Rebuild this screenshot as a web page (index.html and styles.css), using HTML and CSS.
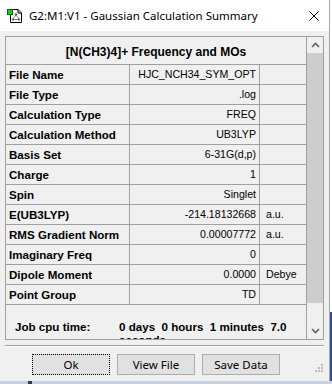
FILE: index.html
```html
<!DOCTYPE html>
<html>
<head>
<meta charset="utf-8">
<link rel="stylesheet" href="styles.css">
</head>
<body>
<div class="window">
  <div class="titlebar">
    <svg class="app-icon" width="16" height="16" viewBox="0 0 16 16">
      <path d="M3.5 1.5 H11 L14.5 5 V14.5 H3.5 Z" fill="#fff" stroke="#000"/>
      <path d="M11 1.5 V5 H14.5" fill="none" stroke="#000"/>
      <path d="M9 6.5 L6 11.5 M9 6.5 L12 11.5 M6 11.5 H12" stroke="#8a8a8a" stroke-width="1"/>
      <circle cx="9" cy="6.5" r="1.3" fill="#6a6a6a"/>
      <circle cx="6" cy="11.5" r="1.3" fill="#6a6a6a"/>
      <circle cx="12" cy="11.5" r="1.3" fill="#6a6a6a"/>
      <rect x="0.5" y="1.5" width="5" height="5" fill="#19d219" stroke="#0a6a0a"/>
    </svg>
    <span class="title">G2:M1:V1 - Gaussian Calculation Summary</span>
    <svg class="close" width="10" height="10" viewBox="0 0 10 10">
      <path d="M0.5 0.5 L9.5 9.5 M9.5 0.5 L0.5 9.5" stroke="#000" stroke-width="1"/>
    </svg>
  </div>
  <div class="client">
    <div class="panel">
      <div class="grid-area">
        <div class="hdr">[N(CH3)4]+ Frequency and MOs</div>
        <div class="row"><div class="lbl">File Name</div><div class="val">HJC_NCH34_SYM_OPT</div><div class="unit"></div></div>
        <div class="row"><div class="lbl">File Type</div><div class="val">.log</div><div class="unit"></div></div>
        <div class="row"><div class="lbl">Calculation Type</div><div class="val">FREQ</div><div class="unit"></div></div>
        <div class="row"><div class="lbl">Calculation Method</div><div class="val">UB3LYP</div><div class="unit"></div></div>
        <div class="row"><div class="lbl">Basis Set</div><div class="val">6-31G(d,p)</div><div class="unit"></div></div>
        <div class="row"><div class="lbl">Charge</div><div class="val">1</div><div class="unit"></div></div>
        <div class="row"><div class="lbl">Spin</div><div class="val">Singlet</div><div class="unit"></div></div>
        <div class="row"><div class="lbl">E(UB3LYP)</div><div class="val">-214.18132668</div><div class="unit">a.u.</div></div>
        <div class="row"><div class="lbl">RMS Gradient Norm</div><div class="val">0.00007772</div><div class="unit">a.u.</div></div>
        <div class="row"><div class="lbl">Imaginary Freq</div><div class="val">0</div><div class="unit"></div></div>
        <div class="row"><div class="lbl">Dipole Moment</div><div class="val">0.0000</div><div class="unit">Debye</div></div>
        <div class="row"><div class="lbl">Point Group</div><div class="val">TD</div><div class="unit"></div></div>
        <div class="cpu"><span class="cpu-lbl">Job cpu time:</span><span class="cpu-val">0 days  0 hours  1 minutes  7.0 seconds</span></div>
      </div>
      <div class="vscroll">
        <div class="sb-up">
          <svg width="9" height="6" viewBox="0 0 9 6"><path d="M1 5 L4.5 1.5 L8 5" fill="none" stroke="#606060" stroke-width="1.6"/></svg>
        </div>
        <div class="sb-thumb"></div>
        <div class="sb-track"></div>
        <div class="sb-down">
          <svg width="9" height="6" viewBox="0 0 9 6"><path d="M1 1 L4.5 4.5 L8 1" fill="none" stroke="#606060" stroke-width="1.6"/></svg>
        </div>
      </div>
    </div>
    <div class="sep"></div>
    <div class="buttons">
      <div class="btn btn-default">Ok</div>
      <div class="btn">View File</div>
      <div class="btn">Save Data</div>
    </div>
    <svg class="grip" width="10" height="10" viewBox="0 0 10 10">
      <rect x="8" y="0" width="2" height="2" fill="#b8b8b8"/>
      <rect x="5" y="3" width="2" height="2" fill="#b8b8b8"/>
      <rect x="8" y="3" width="2" height="2" fill="#b8b8b8"/>
      <rect x="2" y="6" width="2" height="2" fill="#b8b8b8"/>
      <rect x="5" y="6" width="2" height="2" fill="#b8b8b8"/>
      <rect x="8" y="6" width="2" height="2" fill="#b8b8b8"/>
    </svg>
  </div>
</div>
<div class="strip"><div class="strip-block"></div></div>
</body>
</html>
```
FILE: styles.css
```css
html, body {
  margin: 0;
  padding: 0;
}
body {
  width: 332px;
  height: 384px;
  overflow: hidden;
  background: linear-gradient(#ffffff 0, #ffffff 312px, #2f4f8f 312px);
  font-family: "Liberation Sans", Arial, sans-serif;
  color: #000;
}
.window {
  width: 330px;
  height: 381px;
  box-sizing: border-box;
  border-right: 1px solid #a6a6a6;
  display: flex;
  flex-direction: column;
}
.titlebar {
  height: 31px;
  flex: none;
  background: #fff;
  display: flex;
  align-items: center;
}
.app-icon {
  margin-left: 7px;
  flex: none;
}
.title {
  margin-left: 6px;
  font-family: "Noto Sans", sans-serif;
  font-size: 11.5px;
  white-space: nowrap;
}
.close {
  margin-left: auto;
  margin-right: 10px;
  flex: none;
}
.client {
  flex: 1;
  background: #f0f0f0;
  padding: 5px 0 0 5px;
  position: relative;
}
.panel {
  width: 319px;
  height: 304px;
  box-sizing: border-box;
  border: 1px solid #a0a0a0;
  display: flex;
  overflow: hidden;
}
.grid-area {
  width: 301px;
  box-sizing: border-box;
  border-right: 1px solid #a0a0a0;
  overflow: hidden;
  flex: none;
}
.hdr {
  height: 28px;
  box-sizing: border-box;
  border-bottom: 1px solid #a0a0a0;
  text-align: center;
  font-weight: bold;
  font-size: 12px;
  line-height: 14px;
  padding-top: 8px;
}
.row {
  display: flex;
  height: 20px;
  box-sizing: border-box;
  border-bottom: 1px solid #a0a0a0;
  line-height: 19px;
  white-space: nowrap;
}
.lbl {
  width: 124px;
  box-sizing: border-box;
  border-right: 1px solid #a0a0a0;
  padding-left: 3px;
  font-weight: bold;
  font-size: 11.6px;
  flex: none;
}
.val {
  width: 130px;
  box-sizing: border-box;
  border-right: 1px solid #a0a0a0;
  padding-right: 3px;
  text-align: right;
  font-size: 10.6px;
  flex: none;
}
.unit {
  flex: 1;
  padding-left: 6px;
  font-size: 10.6px;
}
.cpu {
  display: flex;
  padding-top: 15px;
  font-weight: bold;
  font-size: 11.6px;
  line-height: 13px;
}
.cpu-lbl {
  width: 113px;
  box-sizing: border-box;
  padding-left: 9px;
  flex: none;
}
.cpu-val {
  width: 182px;
  white-space: pre-wrap;
  flex: none;
}
.vscroll {
  width: 16px;
  display: flex;
  flex-direction: column;
  background: #f0f0f0;
}
.sb-up {
  height: 16px;
  display: flex;
  align-items: center;
  justify-content: center;
}
.sb-thumb {
  height: 250px;
  background: #cdcdcd;
}
.sb-track {
  flex: 1;
}
.sb-down {
  height: 17px;
  display: flex;
  align-items: center;
  justify-content: center;
}
.sep {
  width: 319px;
  height: 1px;
  margin-top: 5px;
  background: #a0a0a0;
  box-shadow: 0 1px 0 #ffffff;
}
.buttons {
  display: flex;
  gap: 7px;
  margin-top: 8px;
  margin-left: 27px;
}
.btn {
  width: 78px;
  height: 21px;
  box-sizing: border-box;
  border: 1px solid #adadad;
  background: #e1e1e1;
  font-family: "Noto Sans", sans-serif;
  font-size: 11.5px;
  line-height: 19px;
  text-align: center;
}
.btn-default {
  border: 1px dotted #000;
}
.grip {
  position: absolute;
  right: 6px;
  bottom: 7px;
}
.strip {
  height: 3px;
  background: #c7d1e0;
  position: relative;
}
.strip-block {
  position: absolute;
  left: 28px;
  top: 0;
  width: 4px;
  height: 3px;
  background: #1f3c70;
}
```
